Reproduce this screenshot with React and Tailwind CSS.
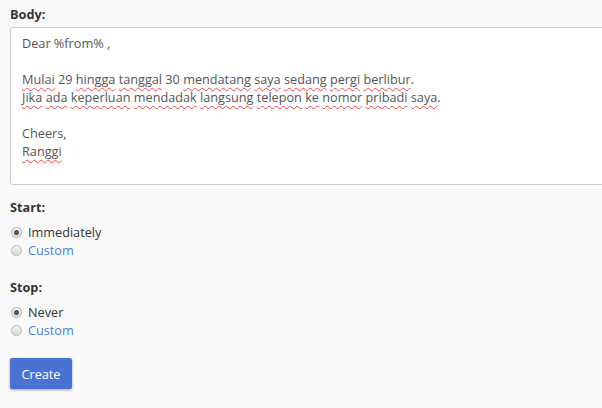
import React from "react";

const Typo = ({ children }) => (
  <span className="underline decoration-wavy decoration-[#e44] decoration-1 underline-offset-[3px]">
    {children}
  </span>
);

const line = (words) =>
  words.map((w, i) => (
    <React.Fragment key={i}>
      {i > 0 && " "}
      {w[1] ? <Typo>{w[0]}</Typo> : w[0]}
    </React.Fragment>
  ));

const Radio = ({ checked, label, link }) => (
  <label className="flex items-center h-[18px] gap-[6px]">
    <span className="ml-[1px] w-[11px] h-[11px] rounded-full border border-[#b5b5b5] bg-gradient-to-b from-[#f4f4f4] to-[#d8d8d8] flex items-center justify-center">
      {checked && <span className="w-[5px] h-[5px] rounded-full bg-[#555]" />}
    </span>
    <span className={link ? "text-[#4a7fd6]" : "text-[#333]"}>{label}</span>
  </label>
);

export default function App() {
  return (
    <div
      className="min-h-screen bg-[#f9f9f9] overflow-hidden pl-[10px] pt-[5px] text-[12.7px] leading-[18px] text-[#333]"
      style={{ fontFamily: '"Open Sans", "Liberation Sans", sans-serif' }}
    >
      <div className="font-bold mb-[4px]">Body:</div>
      <div className="w-[620px] h-[158px] bg-white border border-[#ccc] rounded-[3px] pt-[6px] pl-[11px] text-[#555]">
        <div>Dear %from% ,</div>
        <div>&nbsp;</div>
        <div>
          {line([
            ["Mulai", 1],
            ["29"],
            ["hingga", 1],
            ["tanggal", 1],
            ["30"],
            ["mendatang", 1],
            ["saya", 1],
            ["sedang", 1],
            ["pergi", 1],
            ["berlibur", 1],
          ])}
          .
        </div>
        <div>
          {line([
            ["Jika", 1],
            ["ada", 1],
            ["keperluan", 1],
            ["mendadak", 1],
            ["langsung", 1],
            ["telepon", 1],
            ["ke", 1],
            ["nomor", 1],
            ["pribadi", 1],
            ["saya", 1],
          ])}
          .
        </div>
        <div>&nbsp;</div>
        <div>Cheers,</div>
        <div>
          <Typo>Ranggi</Typo>
        </div>
      </div>

      <div className="font-bold mt-[13px]">Start:</div>
      <div className="mt-[7px]">
        <Radio checked label="Immediately" />
        <Radio label="Custom" link />
      </div>

      <div className="font-bold mt-[19px]">Stop:</div>
      <div className="mt-[7px]">
        <Radio checked label="Never" />
        <Radio label="Custom" link />
      </div>

      <button className="mt-[19px] h-[31px] w-[62px] rounded-[2px] bg-[#4a72d4] text-white shadow-[0_1px_3px_rgba(0,0,0,0.35)]">
        Create
      </button>
    </div>
  );
}
